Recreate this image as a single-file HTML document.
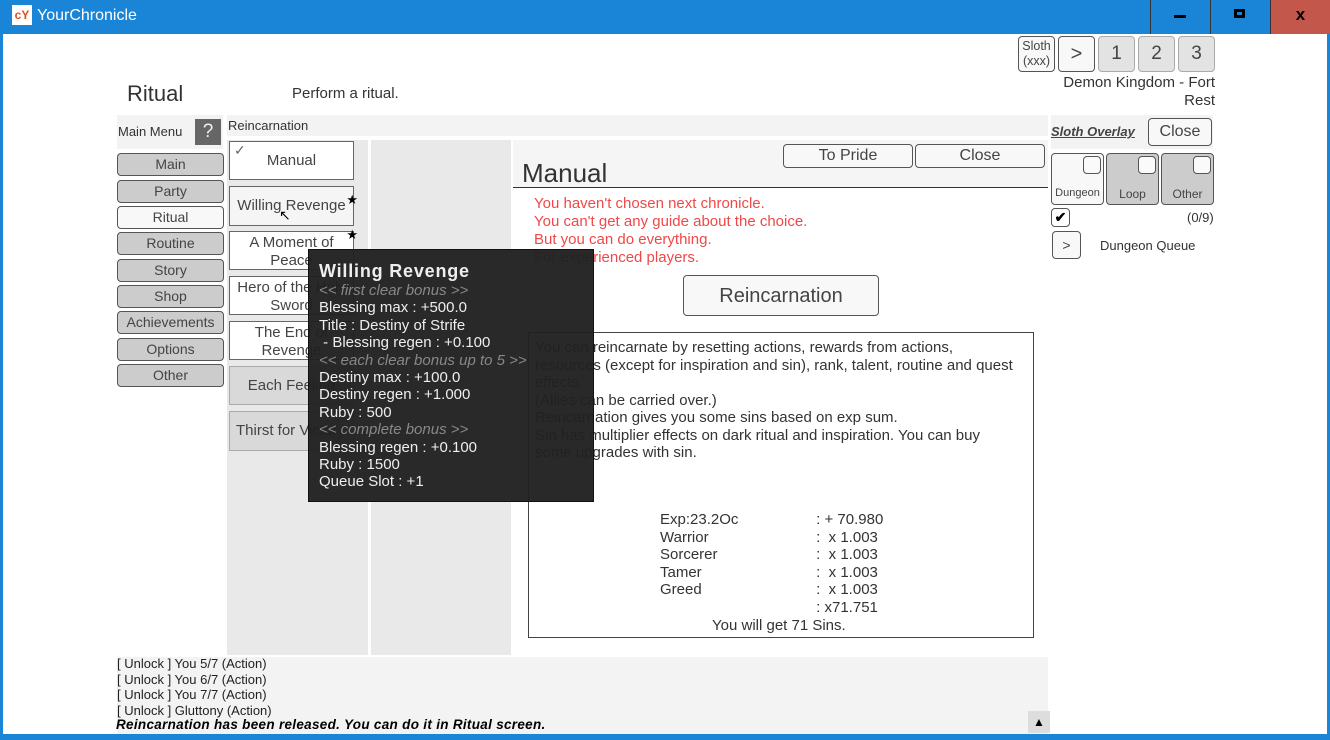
<!DOCTYPE html>
<html><head><meta charset="utf-8"><style>
*{box-sizing:border-box;margin:0;padding:0}
body{width:1330px;height:740px;overflow:hidden;background:#fff;font-family:"Liberation Sans",sans-serif;color:#333;position:relative}
.a{position:absolute}
.tb{left:0;top:0;width:1330px;height:34px;background:#1a84d6}
.btn{position:absolute;border:1px solid #555;border-radius:4px;background:#ccc;text-align:center;font-size:14px;color:#444}
.mb{left:117px;width:107px;height:23px;line-height:21px}
.col{background:#e9e9e9}
.item{position:absolute;left:229px;width:125px;border:1px solid #666;text-align:center;font-size:15px;color:#444;line-height:18px}
.star{position:absolute;font-size:13px;color:#000;right:-5px;top:-6px}
.red{color:#f04848;font-size:15px;line-height:18px}
.tt{left:308px;top:249px;width:286px;height:253px;background:rgba(32,32,32,0.96);border:1px solid #111;color:#eee;font-size:15px;line-height:17.4px;padding:10px 0 0 10px}
.tt i{color:#888}
.narrow{font-family:"Liberation Sans Narrow","Liberation Sans",sans-serif}
</style></head><body>
<div class="a tb"></div>
<div class="a" style="left:12px;top:5px;width:20px;height:20px;background:#fff;color:#e05020;font-size:12px;font-weight:bold;line-height:20px;text-align:center">cY</div>
<div class="a" style="left:37px;top:7px;color:#fff;font-size:16px">YourChronicle</div>
<div class="a" style="left:1150px;top:0;width:60px;height:34px;border-left:1px solid #333"></div>
<div class="a" style="left:1174px;top:15px;width:12px;height:3px;background:#000"></div>
<div class="a" style="left:1210px;top:0;width:60px;height:34px;border-left:1px solid #333"></div>
<div class="a" style="left:1234px;top:9px;width:11px;height:9px;border:3px solid #000"></div>
<div class="a" style="left:1270px;top:0;width:60px;height:34px;background:#c4574c;border-left:1px solid #333;color:#000;font-size:17px;font-weight:bold;text-align:center;line-height:30px">x</div>
<div class="a" style="left:0;top:34px;width:3px;height:706px;background:#1a84d6"></div>
<div class="a" style="left:1327px;top:34px;width:3px;height:706px;background:#1a84d6"></div>
<div class="a" style="left:0;top:734px;width:1330px;height:6px;background:#1a84d6"></div>

<div class="a" style="left:127px;top:81px;font-size:22px">Ritual</div>
<div class="a" style="left:292px;top:85px;font-size:15px">Perform a ritual.</div>

<div class="a" style="left:117px;top:115px;width:106px;height:34px;background:#f3f3f3"></div>
<div class="a" style="left:118px;top:124px;font-size:13px">Main Menu</div>
<div class="a" style="left:195px;top:119px;width:26px;height:26px;background:#666;color:#eee;font-size:19px;text-align:center;line-height:26px">?</div>
<div class="a" style="left:227px;top:115px;width:821px;height:21px;background:#f3f3f3;font-size:13px;padding:3px 0 0 1px">Reincarnation</div>

<div class="btn mb" style="top:153px">Main</div>
<div class="btn mb" style="top:180px">Party</div>
<div class="btn mb" style="top:206px;background:#f8f8f8">Ritual</div>
<div class="btn mb" style="top:232px">Routine</div>
<div class="btn mb" style="top:259px">Story</div>
<div class="btn mb" style="top:285px">Shop</div>
<div class="btn mb" style="top:311px">Achievements</div>
<div class="btn mb" style="top:338px">Options</div>
<div class="btn mb" style="top:364px">Other</div>

<div class="a col" style="left:227px;top:140px;width:141px;height:515px"></div>
<div class="a col" style="left:371px;top:140px;width:140px;height:515px"></div>

<div class="item" style="top:141px;height:39px;background:#fff;line-height:37px">Manual<span class="a" style="left:4px;top:-10px;font-size:14px;color:#666">✓</span></div>
<div class="item" style="top:186px;height:40px;background:#f5f5f5;line-height:38px">Willing Revenge<span class="star">★</span></div>
<div class="item" style="top:231px;height:39px;background:#fff;padding-top:2px">A Moment of<br>Peace<span class="star">★</span></div>
<div class="item" style="top:276px;height:39px;background:#fff;padding-top:2px">Hero of the Holy<br>Sword</div>
<div class="item" style="top:321px;height:39px;background:#fff;padding-top:2px">The End of<br>Revenge</div>
<div class="item" style="top:366px;height:39px;background:#d9d9d9;line-height:37px;border-color:#aaa">Each Feeling</div>
<div class="item" style="top:411px;height:40px;background:#d9d9d9;line-height:38px;border-color:#aaa;text-align:left;padding-left:6px">Thirst for Victory</div>

<div class="a" style="left:513px;top:140px;width:535px;height:48px;background:#f5f5f5;border-bottom:1px solid #333"></div>
<div class="a" style="left:522px;top:158px;font-size:26px">Manual</div>
<div class="btn" style="left:783px;top:144px;width:130px;height:24px;background:#f8f8f8;font-size:16px;line-height:22px">To Pride</div>
<div class="btn" style="left:915px;top:144px;width:130px;height:24px;background:#f8f8f8;font-size:16px;line-height:22px">Close</div>
<div class="a red" style="left:534px;top:195px">You haven't chosen next chronicle.<br>You can't get any guide about the choice.<br>But you can do everything.<br>For experienced players.</div>
<div class="btn" style="left:683px;top:275px;width:196px;height:41px;background:#f8f8f8;font-size:20px;line-height:41px">Reincarnation</div>
<div class="a" style="left:528px;top:332px;width:506px;height:306px;border:1px solid #444;padding:6px 0 0 6px;font-size:15px;line-height:17.5px;white-space:nowrap">You can reincarnate by resetting actions, rewards from actions,<br>resources (except for inspiration and sin), rank, talent, routine and quest<br>effects.<br>(Allies can be carried over.)<br>Reincarnation gives you some sins based on exp sum.<br>Sin has multiplier effects on dark ritual and inspiration. You can buy<br>some upgrades with sin.</div>
<div class="a" style="left:660px;top:511px;font-size:15px;line-height:17.6px">Exp:23.2Oc<br>Warrior<br>Sorcerer<br>Tamer<br>Greed</div>
<div class="a" style="left:812px;top:511px;font-size:15px;line-height:17.6px">&nbsp;: + 70.980<br>&nbsp;:&nbsp; x 1.003<br>&nbsp;:&nbsp; x 1.003<br>&nbsp;:&nbsp; x 1.003<br>&nbsp;:&nbsp; x 1.003<br>&nbsp;: x71.751</div>
<div class="a" style="left:712px;top:617px;font-size:15px">You will get 71 Sins.</div>

<div class="a" style="left:117px;top:657px;width:931px;height:77px;background:#f3f3f3"></div>
<div class="a narrow" style="left:117px;top:656px;font-size:13px;line-height:15.6px;color:#222">[ Unlock ] You 5/7 (Action)<br>[ Unlock ] You 6/7 (Action)<br>[ Unlock ] You 7/7 (Action)<br>[ Unlock ] Gluttony (Action)</div>
<div class="a" style="left:116px;top:717px;font-size:13.5px;font-weight:bold;font-style:italic;color:#000;letter-spacing:0.3px">Reincarnation has been released. You can do it in Ritual screen.</div>
<div class="a" style="left:1028px;top:711px;width:22px;height:22px;background:#ddd;text-align:center;font-size:12px;line-height:22px;color:#000">▲</div>

<div class="btn" style="left:1018px;top:36px;width:37px;height:36px;background:#f8f8f8;font-size:12.5px;line-height:15px;padding-top:2px">Sloth<br>(xxx)</div>
<div class="btn" style="left:1058px;top:36px;width:37px;height:36px;background:#f8f8f8;font-size:20px;line-height:34px">&gt;</div>
<div class="btn" style="left:1098px;top:36px;width:37px;height:36px;background:#e3e3e3;border-color:#aaa;font-size:19px;line-height:34px">1</div>
<div class="btn" style="left:1138px;top:36px;width:37px;height:36px;background:#e3e3e3;border-color:#aaa;font-size:19px;line-height:34px">2</div>
<div class="btn" style="left:1178px;top:36px;width:37px;height:36px;background:#e3e3e3;border-color:#aaa;font-size:19px;line-height:34px">3</div>
<div class="a" style="left:1040px;top:74px;width:175px;text-align:right;font-size:15px;line-height:17.5px">Demon Kingdom - Fort<br>Rest</div>

<div class="a" style="left:1051px;top:115px;width:162px;height:34px;background:#f3f3f3"></div>
<div class="a" style="left:1051px;top:124px;font-size:13px;font-weight:bold;font-style:italic;text-decoration:underline;color:#444">Sloth Overlay</div>
<div class="btn" style="left:1148px;top:118px;width:64px;height:28px;background:#f8f8f8;font-size:16px;line-height:26px">Close</div>
<div class="btn" style="left:1051px;top:153px;width:53px;height:52px;background:#f8f8f8;font-size:11px;padding-top:33px">Dungeon</div>
<div class="btn" style="left:1106px;top:153px;width:53px;height:52px;font-size:12px;padding-top:33px">Loop</div>
<div class="btn" style="left:1161px;top:153px;width:53px;height:52px;font-size:12px;padding-top:33px">Other</div>
<div class="btn" style="left:1083px;top:156px;width:18px;height:18px;background:#fafafa"></div>
<div class="btn" style="left:1138px;top:156px;width:18px;height:18px;background:#fafafa"></div>
<div class="btn" style="left:1193px;top:156px;width:18px;height:18px;background:#fafafa"></div>
<div class="btn" style="left:1051px;top:208px;width:19px;height:19px;background:#fff;font-size:14px;line-height:17px;color:#000;font-weight:bold">✔</div>
<div class="a" style="left:1187px;top:210px;font-size:13px">(0/9)</div>
<div class="btn" style="left:1052px;top:231px;width:29px;height:28px;background:#f8f8f8;font-size:14px;line-height:26px">&gt;</div>
<div class="a" style="left:1100px;top:238px;font-size:13px">Dungeon Queue</div>

<div class="a tt"><div style="font-size:18px;font-weight:bold;letter-spacing:0.8px;line-height:22px">Willing Revenge</div><i>&lt;&lt; first clear bonus &gt;&gt;</i><br>Blessing max : +500.0<br>Title : Destiny of Strife<br>&nbsp;- Blessing regen : +0.100<br><i>&lt;&lt; each clear bonus up to 5 &gt;&gt;</i><br>Destiny max : +100.0<br>Destiny regen : +1.000<br>Ruby : 500<br><i>&lt;&lt; complete bonus &gt;&gt;</i><br>Blessing regen : +0.100<br>Ruby : 1500<br>Queue Slot : +1</div>
<div class="a" style="left:279px;top:207px;font-size:14px;color:#000;text-shadow:0 0 1px #fff">↖</div>
</body></html>
